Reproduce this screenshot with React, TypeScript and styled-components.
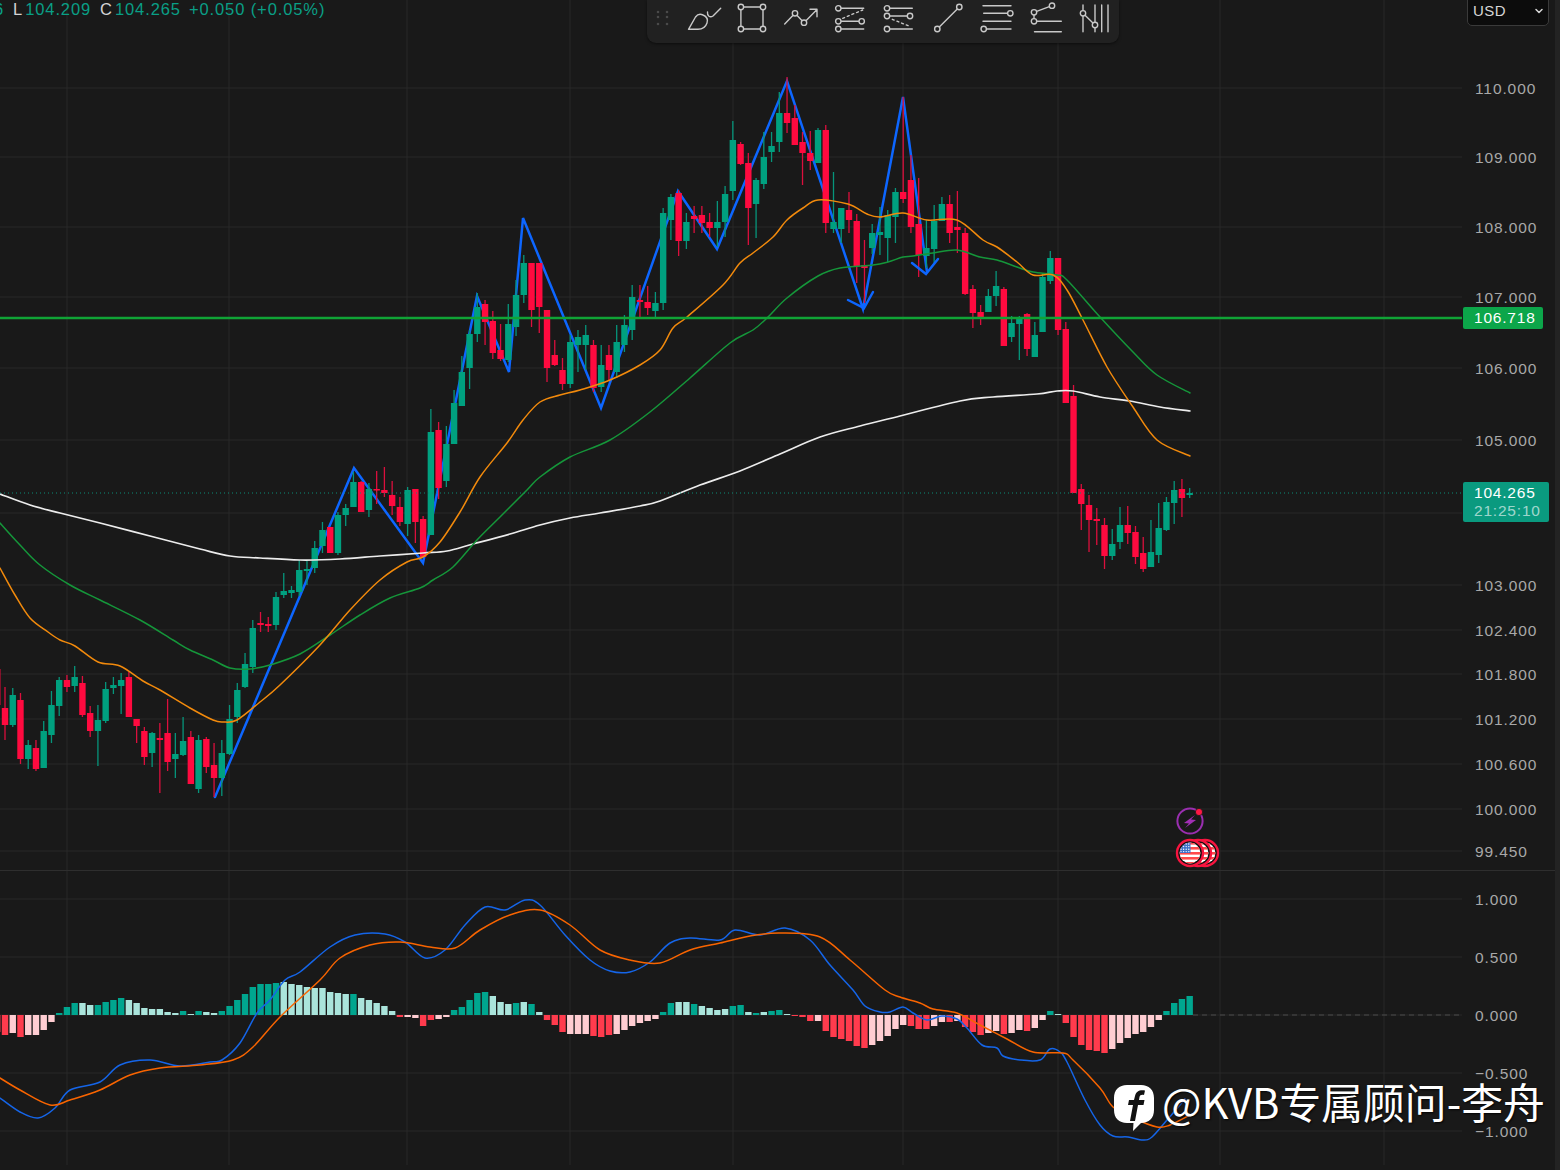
import React from 'react'
import styled, { createGlobalStyle } from 'styled-components'
import { ChevronDown } from 'lucide-react'

const GlobalStyle = createGlobalStyle`
  html, body {
    margin: 0;
    padding: 0;
    background: #191919;
    overflow: hidden;
  }
`

// candle data is in screen pixels: [high, body top, body bottom, low, up?]
type Candle = [number, number, number, number, number]

const candles: Candle[] = [
  [669, 669, 705, 712, 0],
  [687, 708, 725, 740, 0], [688, 695, 725, 727, 1], [693, 700, 759, 764, 0], [740, 745, 759, 769, 1],
  [740, 748, 769, 771, 0], [721, 731, 768, 768, 1], [691, 705, 735, 743, 1], [677, 680, 706, 716, 1],
  [675, 680, 687, 692, 0], [666, 677, 686, 692, 1], [676, 683, 715, 717, 0], [706, 713, 731, 737, 0],
  [705, 720, 731, 766, 1], [682, 689, 721, 723, 1], [677, 685, 688, 694, 1], [673, 680, 686, 714, 1],
  [672, 677, 717, 717, 0], [719, 719, 726, 743, 0], [727, 731, 757, 765, 0], [732, 733, 753, 767, 1],
  [723, 738, 740, 793, 0], [699, 733, 762, 771, 0], [733, 754, 759, 778, 1], [717, 741, 755, 756, 1],
  [731, 737, 784, 784, 0], [735, 740, 789, 793, 1], [737, 739, 767, 773, 0], [743, 765, 778, 797, 0],
  [740, 753, 778, 796, 1], [705, 719, 754, 755, 1], [683, 690, 717, 723, 1], [653, 664, 687, 688, 1],
  [620, 628, 667, 673, 1], [612, 623, 625, 632, 0], [617, 624, 626, 632, 0], [592, 597, 625, 630, 1],
  [573, 591, 595, 598, 1], [586, 590, 593, 598, 1], [560, 570, 592, 596, 1], [561, 569, 571, 585, 1],
  [541, 548, 568, 573, 1], [522, 530, 546, 553, 1], [527, 527, 553, 553, 0], [512, 515, 553, 555, 1],
  [504, 508, 515, 526, 1], [472, 482, 507, 507, 1], [481, 482, 512, 512, 0], [483, 489, 510, 517, 1],
  [471, 489, 490, 504, 0], [467, 490, 493, 497, 0], [481, 495, 506, 515, 0], [497, 507, 522, 526, 0],
  [487, 490, 524, 536, 1], [489, 489, 522, 543, 0], [516, 519, 557, 557, 0], [409, 432, 535, 535, 1],
  [422, 430, 488, 499, 0], [426, 444, 481, 487, 1], [390, 403, 444, 444, 1], [356, 372, 406, 406, 1],
  [330, 334, 368, 389, 1], [293, 307, 334, 342, 1], [300, 304, 322, 345, 0], [311, 321, 353, 359, 0],
  [324, 350, 359, 361, 0], [304, 324, 360, 362, 1], [280, 295, 327, 336, 1], [255, 263, 295, 303, 1],
  [263, 263, 310, 327, 0], [263, 263, 307, 333, 0], [310, 310, 368, 382, 0], [340, 355, 365, 366, 0],
  [358, 370, 384, 390, 0], [335, 342, 384, 388, 1], [330, 337, 345, 372, 1], [325, 335, 345, 370, 1],
  [340, 345, 388, 392, 0], [345, 365, 387, 392, 1], [345, 355, 370, 380, 0], [325, 342, 372, 378, 1],
  [315, 325, 345, 352, 1], [285, 297, 330, 340, 1], [285, 300, 302, 317, 0], [286, 302, 308, 315, 0],
  [292, 303, 311, 318, 1], [208, 213, 303, 310, 1], [194, 197, 220, 240, 1], [190, 193, 241, 256, 0],
  [213, 222, 241, 249, 1], [206, 216, 219, 233, 0], [206, 215, 223, 233, 0], [213, 222, 228, 237, 0],
  [201, 222, 228, 247, 1], [186, 194, 222, 237, 1], [121, 140, 191, 200, 1], [142, 144, 164, 165, 0],
  [153, 163, 208, 245, 0], [178, 180, 204, 238, 1], [132, 157, 184, 189, 1], [132, 146, 152, 162, 1],
  [92, 113, 142, 152, 1], [77, 113, 123, 133, 0], [105, 118, 145, 145, 0], [132, 142, 153, 185, 0],
  [131, 153, 161, 170, 0], [128, 130, 163, 163, 1], [125, 130, 223, 233, 0], [172, 222, 229, 233, 1],
  [208, 208, 229, 243, 1], [192, 210, 220, 233, 0], [214, 221, 266, 283, 0], [240, 265, 268, 303, 0],
  [224, 233, 248, 254, 1], [207, 232, 235, 255, 1], [210, 215, 238, 262, 1], [188, 192, 217, 243, 1],
  [97, 192, 199, 203, 0], [155, 180, 227, 233, 0], [178, 224, 255, 277, 0], [220, 248, 256, 268, 1],
  [205, 221, 249, 263, 1], [197, 204, 221, 221, 1], [195, 204, 233, 243, 0], [191, 227, 230, 253, 0],
  [228, 233, 294, 295, 0], [285, 289, 313, 328, 0], [305, 312, 317, 325, 0], [289, 296, 312, 312, 1],
  [271, 286, 296, 306, 1], [287, 289, 346, 346, 0], [316, 323, 337, 342, 1], [316, 318, 324, 360, 1],
  [313, 314, 349, 356, 0], [322, 335, 357, 357, 1], [273, 277, 332, 332, 1], [251, 258, 281, 284, 1],
  [258, 258, 330, 335, 0], [322, 329, 403, 403, 0], [385, 396, 493, 493, 0], [484, 489, 504, 530, 0],
  [495, 505, 520, 552, 0], [508, 519, 521, 545, 0], [518, 525, 556, 569, 0], [529, 544, 556, 560, 1],
  [507, 525, 542, 549, 1], [506, 525, 533, 544, 0], [526, 532, 557, 564, 0], [537, 553, 569, 572, 0],
  [520, 552, 567, 567, 1], [503, 528, 555, 563, 1], [497, 502, 530, 531, 1], [481, 490, 503, 524, 1],
  [479, 489, 498, 517, 0], [488, 493, 495, 498, 1],
]

const barX = (i: number) => 5 + 7.743 * (i - 1)

const whiteMa = '0,494 30,505 60,513 100,523 150,536 200,549 230,556 260,558 300,560 340,559 380,556 423,553 447,551 473,544 510,534 540,525 570,518 600,513 640,506 660,501 700,485 740,471 780,454 820,437 860,426 900,416 960,401 993,397 1037,394 1057,391 1073,391 1100,397 1130,401 1160,407 1190,411'
const greenMa = '0,523 20,545 40,565 70,585 100,600 140,620 173,640 190,650 213,660 230,668 250,669 270,665 300,654 330,635 360,615 390,598 420,588 433,580 453,567 477,540 500,517 527,490 540,477 570,457 610,440 650,412 690,378 730,343 753,330 767,318 787,298 818,276 840,268 873,265 888,262 903,257 913,256 933,253 957,250 980,257 997,260 1017,267 1033,272 1057,275 1067,280 1100,317 1133,352 1157,375 1190,393'
const orangeMa = '0,568 15,595 30,618 48,632 60,640 75,646 98,662 120,666 143,681 160,690 190,708 213,720 223,722 237,720 260,702 280,685 320,645 350,610 380,580 407,562 423,557 440,542 460,512 480,477 507,443 523,420 540,402 560,395 580,390 610,380 640,365 660,350 673,328 687,317 723,285 740,263 753,253 773,237 787,220 803,208 818,200 848,204 867,214 880,217 903,213 927,220 957,220 983,240 997,247 1017,262 1033,275 1053,275 1067,290 1083,320 1107,367 1133,407 1157,440 1190,456'
const zigzag = '215,797 354,468 423,563 477,296 509,372 523,218 601,408 678,191 717,249 787,81 863,309 903,97 927,272'

const macdBlue = '0,1098 20,1112 38,1118 55,1108 70,1090 100,1082 120,1065 150,1060 180,1066 210,1062 222,1060 240,1043 257,1013 270,1000 285,980 300,972 330,947 355,935 385,934 405,942 425,958 445,950 465,925 485,907 505,910 525,900 540,905 565,935 590,960 610,971 630,972 650,962 670,943 690,938 720,940 735,930 760,935 785,928 810,940 830,965 853,990 865,1006 880,1012 890,1012 903,1007 913,1013 927,1020 942,1016 957,1019 967,1028 982,1045 997,1048 1003,1056 1020,1060 1040,1060 1050,1049 1060,1052 1067,1062 1085,1100 1100,1125 1113,1136 1128,1137 1143,1140 1152,1137 1167,1120 1185,1099'
const macdOrange = '0,1078 20,1090 50,1105 70,1100 100,1090 130,1075 160,1068 200,1065 233,1060 253,1047 280,1017 320,980 340,958 370,945 400,942 430,947 455,948 480,930 510,915 540,910 570,925 600,950 630,960 660,963 690,950 720,943 750,936 780,933 820,937 850,960 885,990 900,997 920,1003 933,1009 957,1013 980,1025 1007,1039 1033,1052 1063,1053 1073,1060 1100,1088 1113,1107 1133,1118 1157,1127 1170,1125 1190,1115'

// histogram bar ends, one per candle; letter says which of the four shades
const histogram = 'r1032 r1035 p1033 r1037 p1035 p1035 p1030 p1022 d1013 d1007 d1003 l1003 l1005 d1005 d1002 d1000 d998 l1000 l1003 l1008 l1009 l1009 l1012 l1013 d1011 l1014 d1011 l1012 l1013 d1011 d1006 d1000 d994 d987 d984 d984 d983 l982 l984 l985 l987 l988 l988 l992 l993 l994 d994 l998 l1000 l1003 l1006 l1011 r1017 p1017 p1018 r1026 r1020 p1019 p1017 d1010 d1007 d1000 d993 d992 l996 l1002 l1004 d1003 l1002 d1004 l1012 r1020 r1025 r1032 p1034 p1034 p1034 r1036 r1037 r1035 p1034 p1030 p1026 p1023 p1021 p1019 d1012 d1003 l1002 l1002 d1004 l1006 l1008 l1010 l1009 d1006 d1005 l1012 d1013 l1012 d1011 d1010 l1014 r1016 r1017 r1021 p1021 r1031 r1037 r1039 r1041 r1046 r1048 p1045 p1041 p1036 p1029 p1025 r1026 r1029 r1029 p1026 p1022 r1022 p1021 r1027 r1032 r1035 p1033 p1031 r1034 p1033 p1030 r1031 p1028 p1020 d1011 l1014 r1023 r1037 r1045 r1050 r1051 r1053 p1049 p1043 p1038 p1034 p1032 p1027 p1020 d1011 d1003 d999 d996'.split(' ')

const shades: Record<string, string> = { d: '#00a68f', l: '#aae4db', r: '#ff3b4d', p: '#ffcdd2' }

const verticals = [67, 229, 407, 570, 733, 903, 1058, 1220, 1384]
const priceTicks: [string, number][] = [
  ['110.000', 88], ['109.000', 157], ['108.000', 227], ['107.000', 297], ['106.000', 368], ['105.000', 440],
  ['103.000', 585], ['102.400', 630], ['101.800', 674], ['101.200', 719], ['100.600', 764], ['100.000', 809], ['99.450', 851],
]
const macdTicks: [string, number][] = [['1.000', 899], ['0.500', 957], ['0.000', 1015], ['−0.500', 1073], ['−1.000', 1131]]

// catmull-rom through the sampled points, so the averages read as curves
const smooth = (points: string) => {
  const p = points.split(' ').map((s) => s.split(',').map(Number))
  let d = `M${p[0][0]} ${p[0][1]}`
  for (let i = 0; i < p.length - 1; i++) {
    const a = p[i - 1] ?? p[i]
    const b = p[i]
    const c = p[i + 1]
    const e = p[i + 2] ?? c
    const c1 = [b[0] + (c[0] - a[0]) / 6, b[1] + (c[1] - a[1]) / 6]
    const c2 = [c[0] - (e[0] - b[0]) / 6, c[1] - (e[1] - b[1]) / 6]
    d += ` C${c1[0].toFixed(1)} ${c1[1].toFixed(1)} ${c2[0].toFixed(1)} ${c2[1].toFixed(1)} ${c[0]} ${c[1]}`
  }
  return d
}

const Page = styled.div`
  position: relative;
  display: grid;
  grid-template-columns: 1fr 5px;
  width: 1560px;
  height: 1170px;
  overflow: hidden;
  background: #191919;
  font-family: 'Liberation Sans', Arial, sans-serif;
`

const Panes = styled.div`
  display: flex;
  flex-direction: column;
  min-width: 0;
`

const EdgeStrip = styled.div`
  background: #232323;
`

const Pane = styled.div<{ $height: number }>`
  display: grid;
  grid-template-columns: 1462px 1fr;
  height: ${(p) => p.$height}px;
  flex: none;
`

const Divider = styled.div`
  height: 1px;
  background: #2e2e2e;
  flex: none;
`

const Plot = styled.svg`
  display: block;
  width: 1462px;
  height: 100%;
`

const GridLine = styled.line`
  stroke: #282828;
  stroke-width: 1;
`

const Wick = styled.line<{ $up: boolean }>`
  stroke: ${(p) => (p.$up ? '#06957b' : '#dc0f3d')};
  stroke-width: 1.3;
`

const Body = styled.rect<{ $up: boolean }>`
  fill: ${(p) => (p.$up ? '#00a07f' : '#ff0a3f')};
`

const Curve = styled.path<{ $color: string; $width?: number }>`
  fill: none;
  stroke: ${(p) => p.$color};
  stroke-width: ${(p) => p.$width ?? 1.5};
  stroke-linejoin: round;
  stroke-linecap: round;
`

const Zigzag = styled.polyline`
  fill: none;
  stroke: #0d66ff;
  stroke-width: 2.5;
  stroke-linejoin: miter;
  stroke-linecap: round;
`

const Axis = styled.div`
  position: relative;
`

const Tick = styled.span`
  position: absolute;
  left: 13px;
  transform: translateY(-50%);
  margin-top: 0.5px;
  color: #a8a8a8;
  font-size: 15.5px;
  line-height: 18px;
  letter-spacing: 0.9px;
  white-space: nowrap;
`

const PriceBadge = styled.div<{ $bg: string; $width: number }>`
  position: absolute;
  left: 1px;
  width: ${(p) => p.$width}px;
  background: ${(p) => p.$bg};
  border-radius: 2px;
  color: #fff;
  font-size: 15.5px;
  line-height: 18px;
  letter-spacing: 0.8px;
  text-align: left;
  padding: 2px 0 2px 11px;
  box-sizing: border-box;
`

const CountDown = styled.div`
  color: rgba(255, 255, 255, 0.62);
`

const CurrencySelect = styled.div`
  position: absolute;
  top: -5px;
  left: 5px;
  width: 82px;
  height: 31px;
  box-sizing: border-box;
  display: flex;
  align-items: center;
  justify-content: space-between;
  padding: 0 3px 0 5px;
  background: #0c0c0c;
  border: 1px solid #3a3a3a;
  border-radius: 5px;
  color: #d6d6d6;
  font-size: 15px;
  letter-spacing: 0.4px;
`

const Legend = styled.div`
  position: absolute;
  top: 0;
  left: -6px;
  display: flex;
  align-items: center;
  height: 19px;
  font-size: 16.5px;
  letter-spacing: 0.9px;
  color: #0a9f86;
  white-space: nowrap;
`

const LegendKey = styled.span`
  color: #d4d4d4;
  margin: 0 2px 0 9px;
`

const LegendChange = styled.span`
  margin-left: 8px;
`

const Toolbar = styled.div`
  position: absolute;
  top: 0;
  left: 647px;
  width: 472px;
  height: 43px;
  display: flex;
  align-items: flex-start;
  background: #212121;
  border-radius: 0 0 9px 9px;
  box-shadow: 0 1px 3px rgba(0, 0, 0, 0.5);
`

const DragHandle = styled.svg`
  width: 28px;
  height: 34px;
  margin-right: 8.5px;
  flex: none;
`

const ToolIcon = styled.svg`
  width: 40px;
  height: 34px;
  margin-right: 8.9px;
  flex: none;
  fill: none;
  stroke: #c9c9c9;
  stroke-width: 1.4;
  stroke-linecap: round;
  stroke-linejoin: round;
  circle {
    fill: #212121;
  }
`

const Watermark = styled.div`
  position: absolute;
  left: 1114px;
  top: 1081px;
  display: flex;
  align-items: flex-start;
  gap: 8px;
  color: #fff;
  font-family: 'Noto Sans CJK SC', 'Noto Sans', sans-serif;
  font-size: 41.8px;
  line-height: 40px;
  white-space: nowrap;
  text-shadow: 1px 1px 2px rgba(0, 0, 0, 0.85);
`

const Logo = styled.svg`
  width: 40px;
  height: 46px;
  margin-top: 4px;
  flex: none;
`

const Chart = ({ top, height, children }: { top: number; height: number; children: React.ReactNode }) => (
  <Plot viewBox={`0 ${top} 1462 ${height}`}>{children}</Plot>
)

const Candles = () => (
  <>
    {candles.map(([h, t, b, l, up], i) => {
      const x = barX(i)
      return (
        <g key={i}>
          <Wick $up={!!up} x1={x} x2={x} y1={h} y2={l} />
          <Body $up={!!up} x={x - 3.2} y={t} width={6.4} height={Math.max(b - t, 1.5)} />
        </g>
      )
    })}
  </>
)

const Histogram = () => (
  <>
    {histogram.map((bar, i) => {
      const end = Number(bar.slice(1))
      return (
        <rect
          key={i}
          x={barX(i) - 3.2}
          y={Math.min(end, 1015)}
          width={6.4}
          height={Math.abs(end - 1015)}
          fill={shades[bar[0]]}
        />
      )
    })}
  </>
)

const FlagBadge = ({ cx }: { cx: number }) => (
  <g>
    <circle cx={cx} cy={853} r={13} fill="#111" stroke="#f7143f" strokeWidth={2.4} />
    <clipPath id={`flag${cx}`}>
      <circle cx={cx} cy={853} r={10.4} />
    </clipPath>
    <g clipPath={`url(#flag${cx})`}>
      <rect x={cx - 11} y={842} width={22} height={22} fill="#fff" />
      {[842, 847, 852, 857, 862].map((y) => (
        <rect key={y} x={cx - 11} y={y} width={22} height={2.6} fill="#ff4a4a" />
      ))}
      <rect x={cx - 11} y={842} width={11.5} height={11} fill="#3f72c9" />
      {[844, 846.6, 849.2, 851.6].map((y) =>
        [-9, -6.4, -3.8, -1.2].map((dx) => <circle key={`${dx}${y}`} cx={cx + dx} cy={y} r={0.7} fill="#fff" />)
      )}
    </g>
  </g>
)

const EventMarks = () => (
  <>
    <circle cx={1190} cy={821} r={12.6} fill="#191919" stroke="#9a2fb0" strokeWidth={2} />
    <path d="M1195 815 L1184 823 L1189 823.5 L1185 828 L1196 820 L1191 819.5 Z" fill="#a12fb5" />
    <circle cx={1199} cy={812} r={3.6} fill="#ff1744" stroke="#191919" strokeWidth={0.8} />
    <FlagBadge cx={1205} />
    <FlagBadge cx={1198} />
    <FlagBadge cx={1190} />
  </>
)

const Tools = () => (
  <>
    <ToolIcon viewBox="0 0 40 34">
      <path d="M4.5 29.3 L11.5 17 C13.5 14.3 16.5 13.8 19 15 C22.5 16.5 24.2 19.5 23 23 C21.5 27.5 18 29.3 14 29.3 Z" />
      <path d="M23.5 12 C23 16 26 18 29 16 L36.7 8.3" />
    </ToolIcon>
    <ToolIcon viewBox="0 0 40 34">
      <path d="M8.9 7 H31 V29 H8.9 Z" />
      <circle cx={8.9} cy={7} r={2.7} />
      <circle cx={31} cy={7} r={2.7} />
      <circle cx={8.9} cy={29} r={2.7} />
      <circle cx={31} cy={29} r={2.7} />
    </ToolIcon>
    <ToolIcon viewBox="0 0 40 34">
      <path d="M3.7 24 L14 13.3 L23 22.7 L36 9.6 M29 9.3 H36 V16.7" />
      <circle cx={14} cy={13.3} r={2.7} />
      <circle cx={23} cy={22.7} r={2.7} />
    </ToolIcon>
    <ToolIcon viewBox="0 0 40 34">
      <path d="M8.3 8.3 H33.7 M8.3 21.3 H31.7 M8.3 29 H33.7" />
      <path d="M12.7 18.3 L32.7 10" strokeDasharray="2 3" />
      <circle cx={8.3} cy={8.3} r={2.7} />
      <circle cx={8.3} cy={21.3} r={2.7} />
      <circle cx={31.7} cy={21.3} r={2.7} />
      <circle cx={8.3} cy={29} r={2.7} />
    </ToolIcon>
    <ToolIcon viewBox="0 0 40 34">
      <path d="M8 8.3 H33.3 M8 16 H31 M8 29 H33.3" />
      <path d="M13.3 19.3 L31.7 26.7" strokeDasharray="2 3" />
      <circle cx={8} cy={8.3} r={2.7} />
      <circle cx={8} cy={16} r={2.7} />
      <circle cx={31} cy={16} r={2.7} />
      <circle cx={8} cy={29} r={2.7} />
    </ToolIcon>
    <ToolIcon viewBox="0 0 40 34">
      <path d="M9.3 29 L31.3 7" />
      <circle cx={31.3} cy={7} r={2.7} />
      <circle cx={9.3} cy={29} r={2.7} />
    </ToolIcon>
    <ToolIcon viewBox="0 0 40 34">
      <path d="M6 5.7 H34 M6.7 13.3 H33 M6 21.3 H34 M6.7 29 H34" />
      <circle cx={33.3} cy={13.3} r={2.7} />
      <circle cx={6.7} cy={29} r={2.7} />
    </ToolIcon>
    <ToolIcon viewBox="0 0 40 34">
      <path d="M8 12.3 L26 5.7 M8 12.3 V21.3 M8 21.3 H35.3 M8.5 31.7 H35.3" />
      <circle cx={26} cy={5.7} r={2.7} />
      <circle cx={8} cy={12.3} r={2.7} />
      <circle cx={8} cy={21.3} r={2.7} />
    </ToolIcon>
    <ToolIcon viewBox="0 0 40 34">
      <path d="M8 5 V31.7 M20 5 V31.7 M26.7 5 V31.7 M33 5 V31.7 M8 13.3 L20 25" />
      <circle cx={8} cy={13.3} r={2.7} />
      <circle cx={20} cy={25} r={2.7} />
    </ToolIcon>
  </>
)

export default function App() {
  return (
    <Page>
      <GlobalStyle />
      <Panes>
        <Pane $height={870}>
          <Chart top={0} height={870}>
            {priceTicks.map(([, y]) => (
              <GridLine key={y} x1={0} x2={1462} y1={y} y2={y} />
            ))}
            <GridLine x1={0} x2={1462} y1={513} y2={513} />
            {verticals.map((x) => (
              <GridLine key={x} x1={x} x2={x} y1={0} y2={870} />
            ))}
            <Zigzag points={zigzag} />
            <Candles />
            <Curve d={smooth(whiteMa)} $color="#ececec" $width={1.7} />
            <Curve d={smooth(greenMa)} $color="#15963a" />
            <Curve d={smooth(orangeMa)} $color="#f28a0c" />
            <Zigzag points="848,300 864,308 873,292" />
            <Zigzag points="912,263 926,274 938,259" />
            <line x1={0} x2={1462} y1={318} y2={318} stroke="#10a336" strokeWidth={2.4} />
            <line x1={0} x2={1462} y1={493} y2={493} stroke="#0c8d78" strokeWidth={1} strokeDasharray="1 3" />
            <EventMarks />
          </Chart>
          <Axis>
            <CurrencySelect>
              USD
              <ChevronDown size={12} strokeWidth={3} />
            </CurrencySelect>
            {priceTicks.map(([label, y]) => (
              <Tick key={label} style={{ top: y }}>
                {label}
              </Tick>
            ))}
            <PriceBadge $bg="#0ca64a" $width={80} style={{ top: 307 }}>
              106.718
            </PriceBadge>
            <PriceBadge $bg="#0a9a7f" $width={86} style={{ top: 482 }}>
              104.265
              <CountDown>21:25:10</CountDown>
            </PriceBadge>
          </Axis>
        </Pane>
        <Divider />
        <Pane $height={299}>
          <Chart top={871} height={299}>
            {macdTicks.map(([, y]) => (
              <GridLine key={y} x1={0} x2={1462} y1={y} y2={y} />
            ))}
            {verticals.map((x) => (
              <GridLine key={x} x1={x} x2={x} y1={871} y2={1165} />
            ))}
            <line x1={1193} x2={1462} y1={1015} y2={1015} stroke="#4a4a4a" strokeDasharray="5 4" />
            <Histogram />
            <Curve d={smooth(macdBlue)} $color="#1565e8" />
            <Curve d={smooth(macdOrange)} $color="#f86400" />
          </Chart>
          <Axis>
            {macdTicks.map(([label, y]) => (
              <Tick key={label} style={{ top: y - 871 }}>
                {label}
              </Tick>
            ))}
          </Axis>
        </Pane>
      </Panes>
      <EdgeStrip />
      <Legend>
        6<LegendKey>L</LegendKey>
        <span>104.209</span>
        <LegendKey>C</LegendKey>
        <span>104.265</span>
        <LegendChange>+0.050 (+0.05%)</LegendChange>
      </Legend>
      <Toolbar>
        <DragHandle viewBox="0 0 28 34">
          {[12, 17, 24].map((y) =>
            [11, 20].map((x) => <circle key={`${x}-${y}`} cx={x} cy={y} r={1.3} fill="#4a4a4a" />)
          )}
        </DragHandle>
        <Tools />
      </Toolbar>
      <Watermark>
        <Logo viewBox="0 0 40 46">
          <path
            d="M13 0 H27 C35 0 40 5 40 13 V25 C40 33 35 38 27 38 H27 L19 46 L19.5 38 H13 C5 38 0 33 0 25 V13 C0 5 5 0 13 0 Z"
            fill="#fff"
          />
          <path
            d="M16 36 L19 20 H14 L15 15 H20 L21 11 C22 6.5 25.5 4.5 31 5.5 L30 10 C27 9.5 26 10.5 25.5 12 L25 15 H30.5 L29.5 20 H24 L21 36 Z"
            fill="#111"
          />
        </Logo>
        <span>@KVB专属顾问-李舟</span>
      </Watermark>
    </Page>
  )
}
